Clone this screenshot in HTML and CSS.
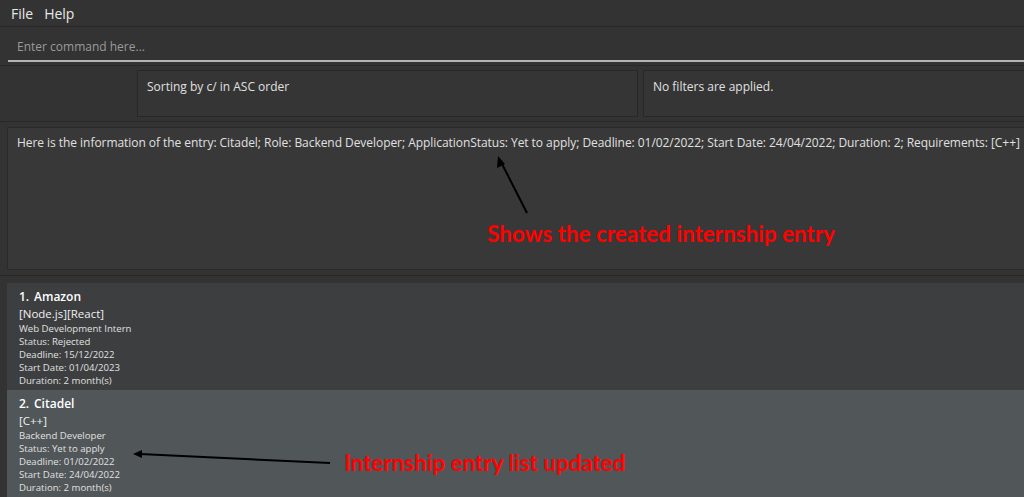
FILE: index.html
```html
<!DOCTYPE html>
<html>
<head>
<meta charset="utf-8">
<link rel="stylesheet" href="styles.css">
</head>
<body>
<div class="app">
  <div class="menubar"><span class="menu-item">File</span><span class="menu-item">Help</span></div>
  <div class="command-wrap"><div class="command">Enter command here...</div></div>
  <div class="status-row">
    <div class="status-spacer"></div>
    <div class="status-box">Sorting by c/ in ASC order</div>
    <div class="status-box">No filters are applied.</div>
  </div>
  <div class="result-wrap">
    <div class="result">Here is the information of the entry: Citadel; Role: Backend Developer; ApplicationStatus: Yet to apply; Deadline: 01/02/2022; Start Date: 24/04/2022; Duration: 2; Requirements: [C++]</div>
  </div>
  <div class="list">
    <div class="card card-even">
      <div class="card-title"><span class="idx">1.</span>Amazon</div>
      <div class="card-tags">[Node.js][React]</div>
      <div class="card-line">Web Development Intern</div>
      <div class="card-line">Status: Rejected</div>
      <div class="card-line">Deadline: 15/12/2022</div>
      <div class="card-line">Start Date: 01/04/2023</div>
      <div class="card-line">Duration: 2 month(s)</div>
    </div>
    <div class="card card-odd">
      <div class="card-title"><span class="idx">2.</span>Citadel</div>
      <div class="card-tags">[C++]</div>
      <div class="card-line">Backend Developer</div>
      <div class="card-line">Status: Yet to apply</div>
      <div class="card-line">Deadline: 01/02/2022</div>
      <div class="card-line">Start Date: 24/04/2022</div>
      <div class="card-line">Duration: 2 month(s)</div>
    </div>
  </div>

  <svg class="annot" width="1024" height="497" viewBox="0 0 1024 497">
    <line x1="527" y1="213" x2="501" y2="162" stroke="#000" stroke-width="2"/>
    <polygon points="498,156 497,168 505,164" fill="#000"/>
    <line x1="330" y1="463" x2="140" y2="454" stroke="#000" stroke-width="2"/>
    <polygon points="133,454 142,450 142,458" fill="#000"/>
  </svg>
  <div class="note note-1">Shows the created internship entry</div>
  <div class="note note-2">Internship entry list updated</div>
</div>
</body>
</html>
```

FILE: styles.css
```css
* { box-sizing: border-box; }
html, body { margin: 0; padding: 0; }
body {
  background: #333333;
  font-family: "Open Sans", "Noto Sans", sans-serif;
  color: #e6e6e6;
  width: 1024px;
  height: 497px;
  overflow: hidden;
}
.app { position: relative; width: 1024px; height: 497px; }

.menubar {
  height: 27px;
  border-bottom: 1px solid #282828;
  display: flex;
  align-items: center;
  padding-left: 11px;
  gap: 11px;
  font-size: 14px;
  color: #e8e8e8;
}

.command-wrap {
  height: 39px;
  padding-left: 8px;
  border-bottom: 1px solid #282828;
}
.command {
  height: 35px;
  border-bottom: 2px solid #b4b4b4;
  padding: 6px 0 0 9px;
  display: flex;
  align-items: center;
  font-size: 12px;
  color: #9a9a9a;
}

.status-row {
  height: 56px;
  display: grid;
  grid-template-columns: 137px 506px 1fr;
  padding: 4px 0 4px 0;
  border-bottom: 1px solid #282828;
}
.status-box {
  border: 1px solid #272727;
  background: #353535;
  font-size: 12px;
  padding: 7px 9px;
  color: #e0e0e0;
  margin-right: 5px;
}
.status-box:last-child { margin-right: 0; border-right: none; }

.result-wrap {
  height: 154px;
  padding: 5px 0 5px 7px;
  border-bottom: 1px solid #282828;
}
.result {
  height: 143px;
  border: 1px solid #2a2a2a;
  border-right: none;
  background: #383838;
  font-size: 12px;
  letter-spacing: -0.05px;
  padding: 6px 9px;
  color: #e0e0e0;
  white-space: nowrap;
}

.list {
  padding: 7px 0 0 7px;
}
.card {
  height: 107px;
  padding: 6px 0 0 12px;
}
.card-even { background: #3c3e3f; }
.card-odd { background: #515658; }
.card-title {
  font-size: 12px;
  font-weight: 600;
  line-height: 16px;
  color: #ffffff;
}
.idx { display: inline-block; width: 15px; }
.card-tags {
  font-size: 11.5px;
  line-height: 17px;
  color: #f0f0f0;
}
.card-line {
  font-size: 9.6px;
  line-height: 13px;
  color: #e0e0e0;
}

.annot { position: absolute; left: 0; top: 0; pointer-events: none; }
.note {
  position: absolute;
  color: #ff0000;
  font-family: "Lato", "Open Sans", sans-serif;
  font-weight: 700;
  font-size: 22.4px;
  line-height: 26px;
  white-space: nowrap;
}
.note-1 { left: 487px; top: 221px; }
.note-2 { left: 344px; top: 450px; }
```
